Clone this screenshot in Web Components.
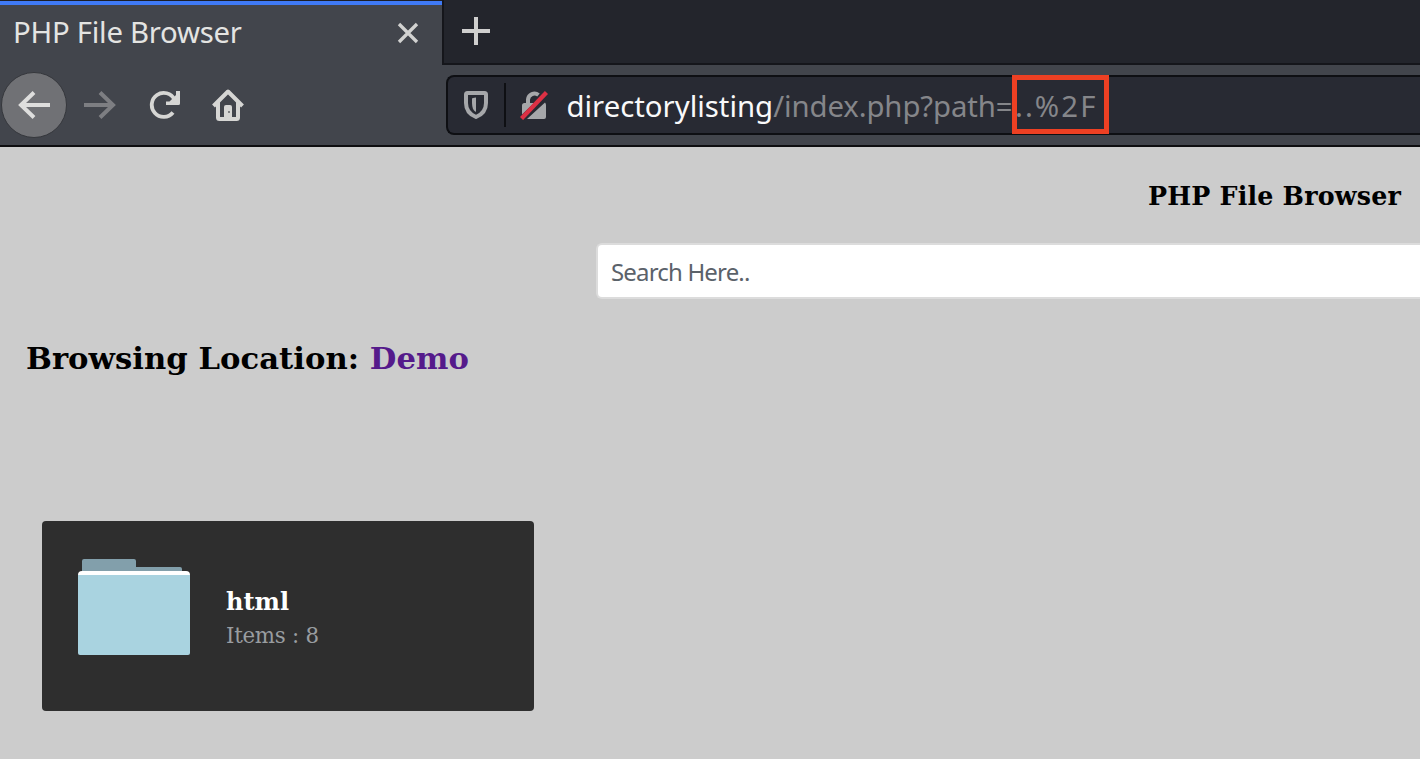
<!DOCTYPE html>
<html lang="en">
<head>
<meta charset="utf-8">
<title>PHP File Browser</title>
<style>
html,body{margin:0;height:100%;overflow:hidden;background:#ccc}
</style>
</head>
<body>
<browser-window></browser-window>
<script>
const define = (name, html) => {
  const t = document.createElement('template');
  t.innerHTML = html;
  customElements.define(name, class extends HTMLElement {
    constructor() {
      super();
      this.attachShadow({mode: 'open'}).append(t.content.cloneNode(true));
    }
  });
};

define('tab-strip', `
<style>
:host{display:flex;height:65px;box-sizing:border-box;background:#42454c;font:29.33px "Noto Sans",sans-serif;color:#e4e4e2}
.tab{box-sizing:border-box;width:442px;height:65px;display:flex;align-items:center;justify-content:space-between;padding:0 23px 0 13px;border-top:1px solid #1d1f26;box-shadow:inset 0 4px #3f7af6;flex:none}
.title{line-height:40px;margin-bottom:2px;white-space:nowrap;letter-spacing:-.26px}
.rest{flex:1;box-sizing:border-box;border-left:2px solid #15161b;border-bottom:2px solid #15161b;background:#23252c;padding:17px 0 0 18px}
svg{display:block;flex:none}
</style>
<div class="tab"><span class="title"><slot></slot></span>
<svg width="22" height="22" viewBox="0 0 22 22"><path d="M2 2 20 20M20 2 2 20" stroke="#d2d2d1" stroke-width="3.300"/></svg></div>
<div class="rest"><svg width="28" height="28" viewBox="0 0 28 28"><path d="M14 0V28M0 14H28" stroke="#cfcfce" stroke-width="4"/></svg></div>`);

define('nav-buttons', `
<style>
:host{display:flex;align-items:center;flex:none;width:446px}
.back{box-sizing:border-box;width:66px;height:66px;margin:0 1px;border:1px solid #35373c;border-radius:50%;background:#707175;display:flex;align-items:center;justify-content:center}
svg{display:block;flex:none}
.f{margin-left:16px}.r{margin-left:33px}.h{margin-left:31px}
</style>
<div class="back"><svg width="32" height="28" viewBox="0 0 32 28"><path d="M2.500 14H32M16 1.500 3 14 16 26.500" fill="none" stroke="#dededd" stroke-width="4"/></svg></div>
<svg class="f" width="32" height="28" viewBox="0 0 32 28"><path d="M0 14H29.500M16 1.500 29 14 16 26.500" fill="none" stroke="#7d7e82" stroke-width="4"/></svg>
<svg class="r" width="32" height="30" viewBox="0 0 32 30"><path d="M25.500 9.500A12 12 0 1 0 24 22.500" fill="none" stroke="#d6d6d4" stroke-width="3.800"/><path d="M27 1H31V13.500Q31 15 29.500 15H17V11.500H20.500L27 5Z" fill="#d6d6d4"/></svg>
<svg class="h" width="32" height="32" viewBox="0 0 32 32"><path d="M1.500 17 16 2.500 30.500 17M6 13V28.500Q6 30 7.500 30H24.500Q26 30 26 28.500V13" fill="none" stroke="#d6d6d4" stroke-width="4" stroke-linejoin="round"/><path d="M12 30V18Q12 16 14 16H18Q20 16 20 18V30Z" fill="#d6d6d4"/><circle cx="17" cy="23" r=".9" fill="#55575c"/></svg>`);

define('address-bar', `
<style>
:host{box-sizing:border-box;display:flex;align-items:center;flex:1;height:60px;border:2px solid #0e0f13;border-right:0;border-radius:8px 0 0 8px;background:#282a33;padding-left:16px;font:29.330px "Noto Sans",sans-serif;color:#85868a;white-space:nowrap}
svg{display:block;flex:none}
.sep{width:2px;height:44px;background:#0e0f13;margin:0 14px 0 16px}
.url{margin-left:19px;line-height:40px;position:relative;top:1px}
b{font-weight:400;color:#f9f9fa;margin-left:-.5px}
.path{letter-spacing:-.1px}
.tail{margin-left:2.500px;letter-spacing:2.100px}
.hl{position:absolute;left:445px;top:-11px;box-sizing:border-box;width:97px;height:59px;border:5px solid #ee4023}
</style>
<svg width="24" height="28" viewBox="0 0 24 28"><path d="M3.500 2H20.500Q22 2 22 3.500V12Q22 22 12 26Q2 22 2 12V3.500Q2 2 3.500 2Z" fill="none" stroke="#a6a7aa" stroke-width="4"/><path d="M12 6.500Q8 6.500 8 8V12Q8 19 12 21Z" fill="#a6a7aa"/></svg>
<div class="sep"></div>
<svg width="28" height="29" viewBox="0 0 28 29"><path d="M8 14V8.500A6.500 6.500 0 0 1 18.500 4" fill="none" stroke="#a6a7aa" stroke-width="4"/><path d="M2 14.500Q2 12 4.500 12H14L2 23.500ZM7 28 25 11.500Q26 12.500 26 14V26Q26 28 24 28Z" fill="#a6a7aa"/><path d="M1.500 27.500 26.500 1.500" stroke="#dc3044" stroke-width="4.400"/></svg>
<div class="url"><b>directorylisting</b><span class="path">/index.php?path=</span><span class="tail">..%2F</span><span class="hl"></span></div>`);

define('search-field', `
<style>
:host{display:block;box-sizing:border-box;height:56px;margin:27px 0 0 596px;border:2px solid #dcdcdc;border-right:0;border-radius:6px 0 0 6px;background:#fff;padding-left:13px;font:24px/53px "Noto Sans",sans-serif;color:#5b626a;letter-spacing:-.83px}
</style><slot></slot>`);

define('folder-icon', `
<style>:host{display:block;flex:none}svg{display:block}</style>
<svg width="112" height="96" viewBox="0 0 112 96"><path d="M4 14V2Q4 0 6 0H56Q58 0 58 2V8H102Q104 8 104 10V14Z" fill="#829fab"/><rect y="12" width="112" height="20" rx="4" fill="#fff"/><path d="M0 16H112V94Q112 96 110 96H2Q0 96 0 94Z" fill="#a9d3e0"/></svg>`);

define('folder-card', `
<style>
:host{display:flex;box-sizing:border-box;width:492px;height:190px;margin:143px 0 0 42px;padding:38px 36px;background:#2e2e2e;border-radius:4px;font-family:"DejaVu Serif",serif;white-space:nowrap}
.t{margin:27px 0 0 36px}
.n{font-weight:700;font-size:24px;line-height:32px;color:#fff}
.c{font-size:21.330px;line-height:36px;color:#999da0;letter-spacing:-.25px}
</style>
<folder-icon></folder-icon><div class="t"><div class="n"><slot></slot></div><div class="c"><slot name="count"></slot></div></div>`);

define('file-page', `
<style>
:host{display:block;background:#ccc;font-family:"DejaVu Serif",serif;color:#000;overflow:hidden;height:612px}
h1{margin:29px 0 0 1148px;font-size:25.330px;line-height:40px;white-space:nowrap;letter-spacing:.18px}
h2{margin:39px 0 0 26px;font-size:30.670px;line-height:40px;letter-spacing:.03px}
a{color:#551a8b}
</style>
<h1>PHP File Browser</h1>
<search-field>Search Here..</search-field>
<h2>Browsing Location: <a>Demo</a></h2>
<folder-card>html<span slot="count">Items : 8</span></folder-card>`);

define('browser-window', `
<style>
:host{display:block;width:1420px;height:759px;overflow:hidden}
.bar{display:flex;box-sizing:border-box;height:82px;padding-top:10px;align-items:flex-start;background:#42454c;border-bottom:2px solid #0e0e10}
nav-buttons{height:60px}
</style>
<tab-strip>PHP File Browser</tab-strip>
<div class="bar"><nav-buttons></nav-buttons><address-bar></address-bar></div>
<file-page></file-page>`);
</script>
</body>
</html>
